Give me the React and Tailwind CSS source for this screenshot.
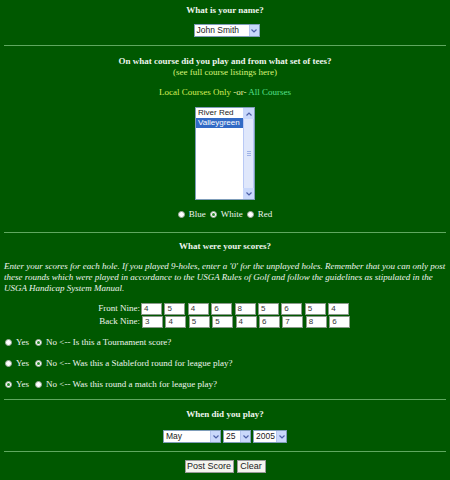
import React from "react";

const front = ["4", "5", "4", "6", "8", "5", "6", "5", "4"];
const back = ["3", "4", "5", "5", "4", "6", "7", "8", "6"];

const questions = [
  { text: "Is this a Tournament score?", yes: false },
  { text: "Was this a Stableford round for league play?", yes: false },
  { text: "Was this round a match for league play?", yes: true },
];

const Hr = () => <div className="mx-[4px] h-px bg-[#5fa85f]" />;

const Radio = ({ checked }) => (
  <span className="inline-flex h-[7px] w-[7px] items-center justify-center rounded-full border border-[#9aa89a] bg-white align-middle">
    {checked && <span className="h-[3px] w-[3px] rounded-full bg-[#2a8a2a]" />}
  </span>
);

const Arrow = () => (
  <span className="flex h-full w-[10px] items-center justify-center border-l border-[#b5c6ef] bg-[#c9d8fb]">
    <svg width="6" height="4" viewBox="0 0 6 4">
      <path d="M0.5 0.5 L3 3 L5.5 0.5" fill="none" stroke="#4d61a8" strokeWidth="1.2" />
    </svg>
  </span>
);

const Select = ({ value, width }) => (
  <div
    className={`flex h-[13px] ${width} items-center border border-[#7f9db9] bg-white font-['Liberation_Sans',sans-serif] text-[8.5px] leading-none text-[#222]`}
  >
    <span className="flex-1 overflow-hidden whitespace-nowrap pl-[2px]">{value}</span>
    <Arrow />
  </div>
);

const ScoreBox = ({ value }) => (
  <div className="h-[12px] w-[21px] border border-[#8a9a8a] bg-white pl-[2px] font-['Liberation_Sans',sans-serif] text-[8px] leading-[10px] text-[#333]">
    {value}
  </div>
);

const App = () => {
  return (
    <div className="h-[480px] w-[450px] overflow-hidden bg-[#005800] font-['Liberation_Serif',serif] text-[9px] leading-[11px] text-[#eef5ee]">
      <div className="flex flex-col items-center pt-[5px]">
        <h2 className="font-bold">What is your name?</h2>
        <div className="mt-[8px] ml-[3px]">
          <Select value="John Smith" width="w-[66px]" />
        </div>
      </div>
      <div className="mt-[8px]">
        <Hr />
      </div>

      <div className="flex flex-col items-center pt-[10px]">
        <h2 className="font-bold">On what course did you play and from what set of tees?</h2>
        <p className="text-[#d9f57a]">(see full course listings here)</p>
        <p className="mt-[9px]">
          <span className="text-[#d6ee58]">Local Courses Only</span>
          <span className="text-[#e6f0a0]"> -or- </span>
          <span className="text-[#54e08c]">All Courses</span>
        </p>
        <div className="mt-[9px] flex h-[93px] w-[60px] border border-[#7f9db9] bg-white font-['Liberation_Sans',sans-serif] text-[8px] leading-[10px] text-[#222]">
          <div className="flex-1 overflow-hidden whitespace-nowrap">
            <div className="pl-[2px]">River Red</div>
            <div className="bg-[#316ac5] pl-[2px] text-white">Valleygreen</div>
          </div>
          <div className="flex w-[11px] flex-col bg-[#f3f4fb]">
            <div className="flex h-[11px] items-center justify-center bg-[#c9d8fb]">
              <svg width="6" height="4" viewBox="0 0 6 4">
                <path d="M0.5 3.5 L3 1 L5.5 3.5" fill="none" stroke="#4d61a8" strokeWidth="1.2" />
              </svg>
            </div>
            <div className="flex flex-1 items-center justify-center border-x border-[#b9c9f5] bg-[#dfe7fb]">
              <div className="flex flex-col gap-[1px]">
                <div className="h-px w-[4px] bg-[#9fb2e6]" />
                <div className="h-px w-[4px] bg-[#9fb2e6]" />
                <div className="h-px w-[4px] bg-[#9fb2e6]" />
              </div>
            </div>
            <div className="flex h-[11px] items-center justify-center bg-[#c9d8fb]">
              <svg width="6" height="4" viewBox="0 0 6 4">
                <path d="M0.5 0.5 L3 3 L5.5 0.5" fill="none" stroke="#4d61a8" strokeWidth="1.2" />
              </svg>
            </div>
          </div>
        </div>
        <div className="mt-[9px] flex items-center gap-[4px]">
          <Radio />
          <span>Blue</span>
          <Radio checked />
          <span>White</span>
          <Radio />
          <span>Red</span>
        </div>
      </div>
      <div className="mt-[12px]">
        <Hr />
      </div>

      <div className="flex flex-col items-center pt-[8px]">
        <h2 className="font-bold">What were your scores?</h2>
      </div>
      <p className="mt-[9px] px-[4px] italic">
        Enter your scores for each hole. If you played 9-holes, enter a '0' for the unplayed holes.
        Remember that you can only post these rounds which were played in accordance to the USGA
        Rules of Golf and follow the guidelines as stipulated in the USGA Handicap System Manual.
      </p>

      <div className="mt-[9px] grid grid-cols-[141px_auto] gap-y-[1px]">
        <span className="pr-[1px] text-right">Front Nine:</span>
        <div className="flex gap-[2.4px]">
          {front.map((v, i) => (
            <ScoreBox key={i} value={v} />
          ))}
        </div>
        <span className="pr-[1px] text-right">Back Nine:</span>
        <div className="flex gap-[2.4px] pl-[1px]">
          {back.map((v, i) => (
            <ScoreBox key={i} value={v} />
          ))}
        </div>
      </div>

      <div className="mt-[9px] flex flex-col gap-[10px] pl-[5px]">
        {questions.map((q) => (
          <div key={q.text} className="flex items-center gap-[4px]">
            <Radio checked={q.yes} />
            <span>Yes</span>
            <span className="ml-[2px]">
              <Radio checked={!q.yes} />
            </span>
            <span>No &lt;-- {q.text}</span>
          </div>
        ))}
      </div>
      <div className="mt-[9px]">
        <Hr />
      </div>

      <div className="flex flex-col items-center pt-[9px]">
        <h2 className="font-bold">When did you play?</h2>
        <div className="mt-[10px] flex gap-[2px]">
          <Select value="May" width="w-[58px]" />
          <Select value="25" width="w-[28px]" />
          <Select value="2005" width="w-[34px]" />
        </div>
      </div>
      <div className="mt-[8px]">
        <Hr />
      </div>

      <div className="flex justify-center gap-[3px] pt-[8px] font-['Liberation_Sans',sans-serif] text-[9px] text-[#222]">
        <button className="h-[13px] w-[49px] border border-[#9a9a9a] bg-[#f4f4ee] leading-none">
          Post Score
        </button>
        <button className="h-[13px] w-[29px] border border-[#9a9a9a] bg-[#f4f4ee] leading-none">
          Clear
        </button>
      </div>
    </div>
  );
};

export default App;
